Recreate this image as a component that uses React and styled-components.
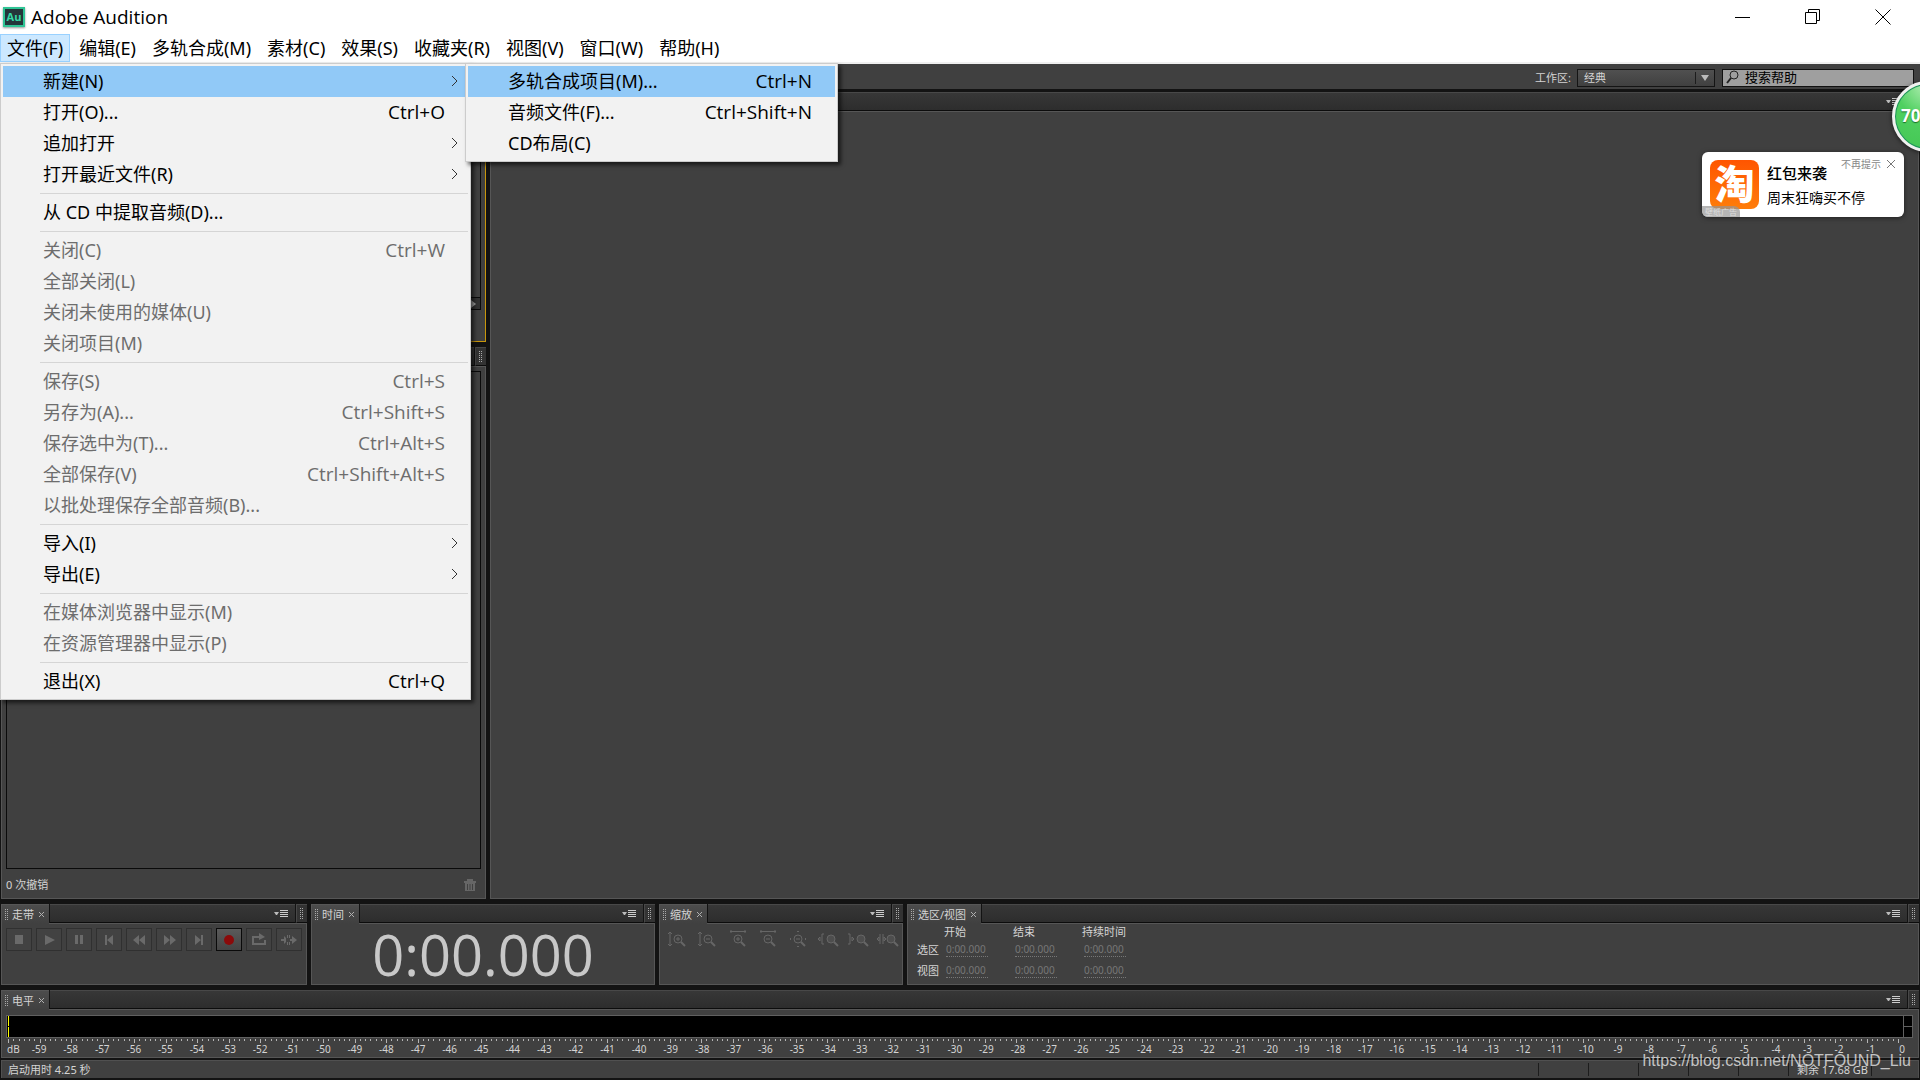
import { Fragment } from "react";
import styled, { createGlobalStyle, css } from "styled-components";

const fileMenu = [
  [
    { label: "新建(N)", sub: true, active: true },
    { label: "打开(O)...", keys: "Ctrl+O" },
    { label: "追加打开", sub: true },
    { label: "打开最近文件(R)", sub: true },
  ],
  [{ label: "从 CD 中提取音频(D)..." }],
  [
    { label: "关闭(C)", keys: "Ctrl+W", off: true },
    { label: "全部关闭(L)", off: true },
    { label: "关闭未使用的媒体(U)", off: true },
    { label: "关闭项目(M)", off: true },
  ],
  [
    { label: "保存(S)", keys: "Ctrl+S", off: true },
    { label: "另存为(A)...", keys: "Ctrl+Shift+S", off: true },
    { label: "保存选中为(T)...", keys: "Ctrl+Alt+S", off: true },
    { label: "全部保存(V)", keys: "Ctrl+Shift+Alt+S", off: true },
    { label: "以批处理保存全部音频(B)...", off: true },
  ],
  [
    { label: "导入(I)", sub: true },
    { label: "导出(E)", sub: true },
  ],
  [
    { label: "在媒体浏览器中显示(M)", off: true },
    { label: "在资源管理器中显示(P)", off: true },
  ],
  [{ label: "退出(X)", keys: "Ctrl+Q" }],
];

const newMenu = [
  [
    { label: "多轨合成项目(M)...", keys: "Ctrl+N", active: true },
    { label: "音频文件(F)...", keys: "Ctrl+Shift+N" },
    { label: "CD布局(C)" },
  ],
];

const menus = ["编辑(E)", "多轨合成(M)", "素材(C)", "效果(S)", "收藏夹(R)", "视图(V)", "窗口(W)", "帮助(H)"];

const transport = [
  { name: "停止", art: <path d="M5 4h8v9H5z" /> },
  { name: "播放", art: <path d="M5 4v10l10-5z" /> },
  { name: "暂停", art: <path d="M5 4h3v9H5zM10 4h3v9h-3z" /> },
  { name: "转到开头", art: <path d="M5 4h2v10H5zM13 4v10L7 9z" /> },
  { name: "快退", art: <path d="M9 4v10L3 9zM15 4v10L9 9z" /> },
  { name: "快进", art: <path d="M4 4v10l6-5zM10 4v10l6-5z" /> },
  { name: "转到结尾", art: <path d="M5 4v10l6-5zM11 4h2v10h-2z" /> },
  { name: "录制", rec: true, art: <circle cx="9" cy="9" r="5" /> },
  {
    name: "循环播放",
    art: <path d="M2 5h7V2l6 4-6 3V7H4v5h10V9h2v5H2z" />,
  },
  {
    name: "跳过所选项",
    art: <path d="M1 8h3V5l2 2v4l-2 2v-3H1zM7 4h1v3H7zM7 11h1v3H7zM9 4h1v3H9zM9 11h1v3H9zM10 8h2V5l5 4-5 4v-3h-2z" />,
  },
];

const glass = (
  <>
    <circle cx="11" cy="9" r="4" />
    <path d="M14 12l4 4" strokeWidth="2" />
  </>
);
const solidGlass = (
  <>
    <circle cx="14" cy="9" r="4" fill="#4e4e4e" />
    <path d="M17 12l4 4" strokeWidth="2" />
  </>
);

const zooms = [
  { name: "垂直放大", art: <>{glass}<path d="M3 2v14M1 4l2-2 2 2M1 14l2 2 2-2M9 9h4M11 7v4" /></> },
  { name: "垂直缩小", art: <>{glass}<path d="M3 2v14M1 4l2-2 2 2M1 14l2 2 2-2M9 9h4" /></> },
  { name: "水平放大", art: <>{glass}<path d="M3 1.5h16M4 0v3M18 0v3M9 9h4M11 7v4" /></> },
  { name: "水平缩小", art: <>{glass}<path d="M3 1.5h16M4 0v3M18 0v3M9 9h4" /></> },
  { name: "全部缩小", art: <>{glass}<path d="M9 9h4M10 2l1-1 1 1M10 16l1 1 1-1M4 8L3 9l1 1M18 8l1 1-1 1" /></> },
  { name: "放大入点", art: <>{solidGlass}<path d="M5 4v10M7 4H5M7 14H5M3 7L1 9l2 2z" /></> },
  { name: "放大出点", art: <>{solidGlass}<path d="M3 4v10M1 4h2M1 14h2M5 7l2 2-2 2z" /></> },
  { name: "缩放至选区", art: <>{solidGlass}<path d="M3 4v10M6 4v10M2 7L0 9l2 2zM7 7l2 2-2 2z" /></> },
];

const marks = Array.from({ length: 61 }, (_, i) => i - 60);
const ticks = Array.from({ length: 361 }, (_, i) => i);

const MenuList = ({ groups }) => (
  <>
    {groups.map((group, i) => (
      <Fragment key={i}>
        {i > 0 && <Separator />}
        {group.map((item) => (
          <MenuRow key={item.label} role="menuitem" disabled={item.off} $active={item.active}>
            <span>{item.label}</span>
            {item.keys && <Keys>{item.keys}</Keys>}
            {item.sub && (
              <SubArrow viewBox="0 0 8 12">
                <path d="M1 1l5 5-5 5" />
              </SubArrow>
            )}
          </MenuRow>
        ))}
      </Fragment>
    ))}
  </>
);

const PanelHead = ({ title }) => (
  <Head>
    {title && (
      <Tab>
        <Grip />
        {title}
        <TabClose aria-label={"关闭" + title}>
          <svg width="7" height="7" viewBox="0 0 7 7">
            <path d="M1 1l5 5M6 1L1 6" stroke="#b0b0b0" />
          </svg>
        </TabClose>
      </Tab>
    )}
    <Strip>
      <PanelMenu aria-label="面板菜单">
        <svg width="15" height="9" viewBox="0 0 15 9">
          <path d="M0 3h5L3 6H2z" fill="#bbb" />
          <path d="M6 1h8M6 3h8M6 5h8M6 7h8" stroke="#ccc" transform="translate(0 .5)" />
        </svg>
      </PanelMenu>
    </Strip>
    <GripEnd>
      <Grip />
    </GripEnd>
  </Head>
);

const App = () => {
  return (
    <Window>
      <GlobalStyle />
      <TitleBar>
        <AppIcon>Au</AppIcon>
        <AppTitle>Adobe Audition</AppTitle>
        <WindowButton aria-label="最小化">
          <svg viewBox="0 0 16 16">
            <path d="M0 8.5h15" />
          </svg>
        </WindowButton>
        <WindowButton aria-label="还原">
          <svg viewBox="0 0 16 16">
            <path d="M.5 3.5h11v11H.5zM3.5 3V.5h11v11H12" />
          </svg>
        </WindowButton>
        <WindowButton aria-label="关闭">
          <svg viewBox="0 0 16 16">
            <path d="M.5.5l15 15M15.5.5l-15 15" />
          </svg>
        </WindowButton>
      </TitleBar>

      <MenuBar>
        <MenuAnchor>
          <MenuTitle $open>文件(F)</MenuTitle>
          <Dropdown role="menu">
            <MenuList groups={fileMenu} />
          </Dropdown>
          <SubMenu role="menu">
            <MenuList groups={newMenu} />
          </SubMenu>
        </MenuAnchor>
        {menus.map((name) => (
          <MenuTitle key={name}>{name}</MenuTitle>
        ))}
      </MenuBar>

      <Toolbar>
        <label htmlFor="workspace">工作区:</label>
        <SelectBox>
          <select id="workspace">
            <option>经典</option>
          </select>
          <svg width="19" height="12" viewBox="0 0 19 12">
            <path d="M.5 0v12" stroke="#1c1c1c" />
            <path d="M6 3h8l-4 6z" fill="#bbb" />
          </svg>
        </SelectBox>
        <SearchBox>
          <svg width="14" height="14" viewBox="0 0 14 14">
            <circle cx="8" cy="5" r="4" />
            <path d="M5 8l-4 5" strokeWidth="2" />
          </svg>
          <input aria-label="搜索帮助" placeholder="搜索帮助" />
        </SearchBox>
      </Toolbar>

      <Workspace>
        <SideColumn>
          <FilesPanel>
            <PanelHead />
            <PanelBody $active>
              <Well>
                <ScrollBar>
                  <svg width="6" height="8" viewBox="0 0 6 8">
                    <path d="M0 0v8l5-4z" fill="#aaa" />
                  </svg>
                </ScrollBar>
              </Well>
            </PanelBody>
          </FilesPanel>
          <HistoryPanel>
            <PanelHead />
            <PanelBody>
              <Well $short />
              <HistoryFoot>
                0 次撤销
                <TrashButton aria-label="删除历史">
                  <svg width="12" height="13" viewBox="0 0 12 13">
                    <path d="M3 1h6v2H3zM0 3h12v2H0zM1 5h10v8H1z" />
                    <path d="M3.500 6v6M6 6v6M8.500 6v6" stroke="#404040" />
                  </svg>
                </TrashButton>
              </HistoryFoot>
            </PanelBody>
          </HistoryPanel>
        </SideColumn>
        <Panel>
          <PanelHead />
          <PanelBody />
        </Panel>
      </Workspace>

      <Dock>
        <DockPanel $width={306}>
          <PanelHead title="走带" />
          <PanelBody>
            <TransportRow>
              {transport.map((b) => (
                <TransportButton key={b.name} aria-label={b.name} $rec={b.rec}>
                  <svg width="18" height="18" viewBox="0 0 18 18">{b.art}</svg>
                </TransportButton>
              ))}
            </TransportRow>
          </PanelBody>
        </DockPanel>
        <DockPanel $width={344}>
          <PanelHead title="时间" />
          <PanelBody>
            <Clock>0:00.000</Clock>
          </PanelBody>
        </DockPanel>
        <DockPanel $width={244}>
          <PanelHead title="缩放" />
          <PanelBody>
            <ZoomRow>
              {zooms.map((z) => (
                <ZoomButton key={z.name} aria-label={z.name}>
                  <svg width="22" height="18" viewBox="0 0 22 18">{z.art}</svg>
                </ZoomButton>
              ))}
            </ZoomRow>
          </PanelBody>
        </DockPanel>
        <Panel>
          <PanelHead title="选区/视图" />
          <PanelBody>
            <RangeTable>
              <thead>
                <tr>
                  <td />
                  <th>开始</th>
                  <th>结束</th>
                  <th>持续时间</th>
                </tr>
              </thead>
              <tbody>
                {["选区", "视图"].map((row) => (
                  <tr key={row}>
                    <th>{row}</th>
                    {["开始", "结束", "持续时间"].map((col) => (
                      <td key={col}>
                        <TimeInput aria-label={row + col} defaultValue="0:00.000" />
                      </td>
                    ))}
                  </tr>
                ))}
              </tbody>
            </RangeTable>
          </PanelBody>
        </Panel>
      </Dock>

      <LevelsPanel>
        <PanelHead title="电平" />
        <PanelBody>
          <Meter>
            <Channels>
              <Peak />
              <Peak />
            </Channels>
            <Clips>
              <Clip />
              <Clip />
            </Clips>
          </Meter>
          <Ruler>
            {ticks.map((t) => (
              <Tick key={t} $major={t % 6 === 0} />
            ))}
          </Ruler>
          <Scale>
            {marks.map((m) => (
              <Mark key={m} $first={m === -60}>
                {m === -60 ? "dB" : m}
              </Mark>
            ))}
          </Scale>
        </PanelBody>
      </LevelsPanel>

      <StatusBar>
        <StatusText>启动用时 4.25 秒</StatusText>
        <StatusCell />
        <StatusCell />
        <StatusCell />
        <StatusCell />
        <StatusCell />
        <StatusCell $wide>剩余 17.68 GB</StatusCell>
        <StatusCell />
      </StatusBar>

      <Watermark>https://blog.csdn.net/NOTFOUND_Liu</Watermark>

      <Toast>
        <TaoLogo>淘</TaoLogo>
        <ToastText>
          <strong>红包来袭</strong>
          <span>周末狂嗨买不停</span>
        </ToastText>
        <ToastActions>
          <button>不再提示</button>
          <button aria-label="关闭">
            <svg width="10" height="10" viewBox="0 0 10 10">
              <path d="M1 1l8 8M9 1L1 9" stroke="#777" />
            </svg>
          </button>
        </ToastActions>
        <AdBadge>壁纸广告</AdBadge>
      </Toast>
      <SpeedBall>70</SpeedBall>
    </Window>
  );
};

export default App;

const GlobalStyle = createGlobalStyle`
  * {
    box-sizing: border-box;
  }

  body {
    margin: 0;
    background: #131313;
    font-family: "Noto Sans", "Noto Sans CJK SC", sans-serif;
  }

  button,
  input,
  select {
    margin: 0;
    padding: 0;
    border: 0;
    background: none;
    color: inherit;
    font: inherit;
  }
`;

const Window = styled.div`
  position: relative;
  display: flex;
  flex-direction: column;
  height: 100vh;
  padding-bottom: 2px;
  overflow: hidden;
  color: #d4d4d4;
  font-size: 11px;
  line-height: 16px;
`;

const TitleBar = styled.header`
  display: flex;
  align-items: center;
  height: 34px;
  flex-shrink: 0;
  padding: 0 2px 0 3px;
  background: #fff;
  color: #000;
`;

const AppIcon = styled.span`
  width: 22px;
  height: 20px;
  border: 2px solid #2fc495;
  background: #24363a;
  color: #36d9a5;
  font-family: "Open Sans", sans-serif;
  font-size: 11px;
  font-weight: 700;
  line-height: 16px;
  text-align: center;
  box-shadow: 0 1px 2px #999;
`;

const AppTitle = styled.span`
  flex: 1;
  margin-left: 6px;
  font-family: "Open Sans", sans-serif;
  font-size: 19px;
  line-height: 24px;
`;

const WindowButton = styled.button`
  display: flex;
  justify-content: center;
  width: 70px;

  svg {
    width: 16px;
    height: 16px;
    fill: none;
    stroke: #000;
  }
`;

const MenuBar = styled.nav`
  display: flex;
  flex-shrink: 0;
  gap: 2px;
  height: 30px;
  border-bottom: 2px solid #f0f0f0;
  background: #fff;
  color: #000;
`;

const MenuAnchor = styled.div`
  position: relative;
`;

const MenuTitle = styled.button`
  height: 28px;
  padding: 0 7px;
  font-size: 18px;
  line-height: 26px;
  white-space: nowrap;

  ${(p) =>
    p.$open &&
    css`
      padding: 0 6px;
      border: 1px solid #99d1ff;
      background: #cce8ff;
    `}
`;

const Dropdown = styled.div`
  position: absolute;
  z-index: 10;
  top: 29px;
  left: 0;
  width: 471px;
  padding: 2px;
  border: 1px solid #ccc;
  background: #f2f2f2;
  box-shadow: 3px 3px 4px rgba(0, 0, 0, 0.6);
`;

const SubMenu = styled(Dropdown)`
  left: 465px;
  width: 373px;
`;

const MenuRow = styled.button`
  display: flex;
  align-items: center;
  justify-content: space-between;
  width: 100%;
  height: 31px;
  padding: 0 23px 2px 40px;
  background: ${(p) => (p.$active ? "#91c9f7" : "transparent")};
  color: ${(p) => (p.disabled ? "#6d6d6d" : "#000")};
  font-size: 18px;
  line-height: 26px;
  white-space: nowrap;
`;

const Keys = styled.span`
  font-family: "Open Sans", sans-serif;
  font-size: 19px;
`;

const SubArrow = styled.svg`
  width: 8px;
  height: 12px;
  margin-right: -14px;
  fill: none;
  stroke: #333;
`;

const Separator = styled.div`
  height: 1px;
  margin: 3px 0 3px 37px;
  background: #d5d5d5;
`;

const Toolbar = styled.div`
  display: flex;
  align-items: center;
  justify-content: flex-end;
  flex-shrink: 0;
  height: 25px;
  padding: 3px 6px 0 0;
  background: #404040;
`;

const SelectBox = styled.div`
  display: flex;
  align-items: center;
  width: 138px;
  height: 18px;
  margin: 0 7px 0 6px;
  border: 1px solid #141414;
  background: linear-gradient(#505050, #404040);

  select {
    flex: 1;
    padding-left: 6px;
    appearance: none;
    outline: none;
  }
`;

const SearchBox = styled.div`
  display: flex;
  align-items: center;
  width: 192px;
  height: 18px;
  padding: 0 0 2px 3px;
  border: 1px solid #111;
  background: #9f9f9f;

  svg {
    fill: none;
    stroke: #222;
  }

  input {
    flex: 1;
    min-width: 0;
    padding-left: 5px;
    outline: none;
    font-size: 13px;
    line-height: 16px;
  }

  input::placeholder {
    color: #000;
    opacity: 1;
  }
`;

const Workspace = styled.main`
  display: flex;
  flex: 1;
  gap: 4px;
  min-height: 0;
  padding: 3px 1px 5px;
`;

const SideColumn = styled.div`
  display: flex;
  flex-direction: column;
  gap: 5px;
  width: 485px;
`;

const Panel = styled.section`
  display: flex;
  flex: 1;
  flex-direction: column;
  min-width: 0;
`;

const FilesPanel = styled(Panel)`
  flex: 0 0 250px;
`;

const HistoryPanel = styled(Panel)`
  min-height: 0;
`;

const Head = styled.div`
  position: relative;
  z-index: 1;
  display: flex;
  flex-shrink: 0;
  height: 19px;
`;

const Tab = styled.div`
  display: flex;
  align-items: center;
  margin-bottom: -1px;
  padding: 0 4px 0 3px;
  border: 1px solid #565656;
  border-width: 1px 0 0 1px;
  background: linear-gradient(#4c4c4c, #404040);
`;

const Grip = styled.span`
  flex-shrink: 0;
  width: 3px;
  height: 11px;
  margin-right: 4px;
  background: repeating-linear-gradient(#aaa 0 1px, transparent 1px 2px);
  mask: repeating-linear-gradient(90deg, #000 0 1px, transparent 1px 2px);
`;

const TabClose = styled.button`
  display: flex;
  margin-left: 4px;
`;

const Strip = styled.div`
  display: flex;
  flex: 1;
  align-items: center;
  justify-content: flex-end;
  margin-left: 1px;
  padding-right: 6px;
  border-top: 1px solid #484848;
  border-bottom: 1px solid #0c0c0c;
  background: linear-gradient(#373737, #2d2d2d);
`;

const PanelMenu = styled.button`
  display: flex;
`;

const GripEnd = styled.div`
  display: flex;
  align-items: center;
  width: 11px;
  margin-left: 1px;
  padding-left: 3px;
  border: 1px solid #484848;
  border-width: 1px 0 1px 1px;
  border-bottom-color: #0c0c0c;
  background: #333;
`;

const PanelBody = styled.div`
  display: flex;
  flex: 1;
  flex-direction: column;
  min-height: 0;
  border: 1px solid ${(p) => (p.$active ? "#c8960c" : "#565656")};
  background: #404040;
`;

const Well = styled.div`
  display: flex;
  flex: 1;
  align-items: flex-end;
  justify-content: flex-end;
  margin: ${(p) => (p.$short ? "4px 4px 0" : "4px 4px 31px")};
  border: 1px solid #0a0a0a;
`;

const ScrollBar = styled.div`
  display: flex;
  align-items: center;
  justify-content: flex-end;
  width: 100%;
  height: 12px;
  padding-right: 3px;
  border-top: 1px solid #0a0a0a;
  background: #333;
`;

const HistoryFoot = styled.div`
  display: flex;
  align-items: center;
  justify-content: space-between;
  height: 29px;
  padding: 2px 9px 0 4px;
`;

const TrashButton = styled.button`
  display: flex;
  fill: #666;
`;

const Dock = styled.div`
  display: flex;
  flex-shrink: 0;
  gap: 4px;
  height: 81px;
  padding: 0 1px;
`;

const DockPanel = styled(Panel)`
  flex: 0 0 ${(p) => p.$width}px;
`;

const TransportRow = styled.div`
  display: flex;
  gap: 4px;
  padding: 4px;
`;

const TransportButton = styled.button`
  display: flex;
  align-items: center;
  justify-content: center;
  width: 26px;
  height: 23px;
  border: 1px solid ${(p) => (p.$rec ? "#0a0a0a" : "#303030")};
  background: ${(p) => (p.$rec ? "linear-gradient(#5a5a5a, #454545)" : "#424242")};
  fill: ${(p) => (p.$rec ? "#8b0a0a" : "#6a6a6a")};
`;

const Clock = styled.div`
  color: #c8c8c8;
  font-family: "Open Sans", sans-serif;
  font-size: 56px;
  font-weight: 400;
  line-height: 60px;
  text-align: center;
`;

const ZoomRow = styled.div`
  display: flex;
  padding: 6px 3px;
`;

const ZoomButton = styled.button`
  display: flex;
  flex-shrink: 0;
  justify-content: center;
  width: 30px;

  svg {
    fill: none;
    stroke: #666;
  }
`;

const RangeTable = styled.table`
  width: 234px;
  margin-left: 9px;
  border-collapse: collapse;
  table-layout: fixed;

  th,
  td {
    height: 21px;
    padding: 0;
    font-weight: 400;
    text-align: left;
    white-space: nowrap;
  }

  thead td,
  thead th {
    height: 15px;
    line-height: 15px;
  }

  thead td {
    width: 27px;
  }

  tbody td {
    padding-left: 2px;
  }
`;

const TimeInput = styled.input`
  display: block;
  width: 42px;
  border-bottom: 1px dotted #777;
  outline: none;
  color: #777;
  font-size: 10px;
  line-height: 14px;
`;

const LevelsPanel = styled(Panel)`
  flex: 0 0 68px;
  margin: 5px 1px 2px;
`;

const Meter = styled.div`
  display: flex;
  height: 23px;
  margin: 5px 5px 0 4px;
  border: 1px solid #606060;
  background: #000;
`;

const Channels = styled.div`
  display: flex;
  flex: 1;
  flex-direction: column;
  gap: 1px;
`;

const Peak = styled.div`
  flex: 1;
  width: 2px;
  border-right: 1px solid #ff0;
`;

const Clips = styled.div`
  display: flex;
  flex-direction: column;
  width: 9px;
  border-left: 1px solid #606060;
`;

const Clip = styled.div`
  flex: 1;

  & + & {
    border-top: 1px solid #606060;
  }
`;

const Ruler = styled.div`
  display: flex;
  justify-content: space-between;
  height: 5px;
  margin: 0 16px 0 6px;
`;

const Tick = styled.span`
  width: 1px;
  height: ${(p) => (p.$major ? 4 : 2)}px;
  margin-top: 1px;
  background: #b4b4b4;
`;

const Scale = styled.div`
  display: flex;
  justify-content: space-between;
  height: 14px;
  margin: 0 15px 0 5px;
  font-size: 10px;
  line-height: 12px;
`;

const Mark = styled.span`
  display: flex;
  justify-content: ${(p) => (p.$first ? "flex-start" : "center")};
  width: 1px;
`;

const StatusBar = styled.footer`
  display: flex;
  flex-shrink: 0;
  align-items: center;
  height: 18px;
  margin: 0 1px;
  border: 1px solid #505050;
  border-bottom: 0;
  background: #404040;
`;

const StatusText = styled.span`
  flex: 1;
  padding-left: 6px;
`;

const StatusCell = styled.span`
  width: ${(p) => (p.$wide ? 83 : 50)}px;
  height: 13px;
  padding-left: 8px;
  border-left: 1px solid #1c1c1c;
  line-height: 13px;
  white-space: nowrap;

  &:last-child {
    width: 47px;
  }
`;

const Watermark = styled.div`
  position: absolute;
  right: 9px;
  bottom: 9px;
  color: rgba(255, 255, 255, 0.7);
  font-family: "Liberation Sans", sans-serif;
  font-size: 16px;
  line-height: 20px;
`;

const Toast = styled.aside`
  position: absolute;
  top: 152px;
  right: 16px;
  display: flex;
  width: 202px;
  height: 65px;
  padding: 8px;
  border-radius: 6px;
  background: #fff;
  box-shadow: 0 1px 5px rgba(0, 0, 0, 0.5);
  color: #000;
`;

const TaoLogo = styled.div`
  width: 49px;
  height: 49px;
  border-radius: 8px;
  background: linear-gradient(#ff5500, #ff7d0a);
  color: #fff;
  font-size: 40px;
  font-weight: 900;
  line-height: 47px;
  text-align: center;
`;

const ToastText = styled.div`
  display: flex;
  flex-direction: column;
  gap: 5px;
  padding: 3px 0 0 8px;
  font-size: 14px;
  line-height: 20px;

  strong {
    font-size: 15px;
    font-weight: 500;
  }
`;

const ToastActions = styled.div`
  position: absolute;
  top: 4px;
  right: 8px;
  display: flex;
  align-items: center;
  gap: 5px;
  color: #888;
  font-size: 10px;
  line-height: 16px;

  svg {
    display: block;
  }
`;

const AdBadge = styled.span`
  position: absolute;
  bottom: 0;
  left: 0;
  width: 38px;
  border-radius: 0 6px 0 6px;
  background: rgba(150, 150, 150, 0.7);
  color: #ddd;
  font-size: 8px;
  line-height: 11px;
  text-align: center;
`;

const SpeedBall = styled.div`
  position: absolute;
  z-index: 5;
  top: 81px;
  right: -43px;
  width: 71px;
  height: 71px;
  padding-left: 6px;
  border: 3px solid #f0f0f0;
  border-radius: 50%;
  background: radial-gradient(circle at 50% 0, #b8f0b8, #4fd060 45%, #43c653);
  box-shadow: inset 0 0 0 1px #1f8f5f, 0 1px 5px rgba(0, 0, 0, 0.6);
  color: #fff;
  font-size: 17px;
  font-weight: 700;
  line-height: 63px;
  text-shadow: 0 1px 1px #186f28;
`;
